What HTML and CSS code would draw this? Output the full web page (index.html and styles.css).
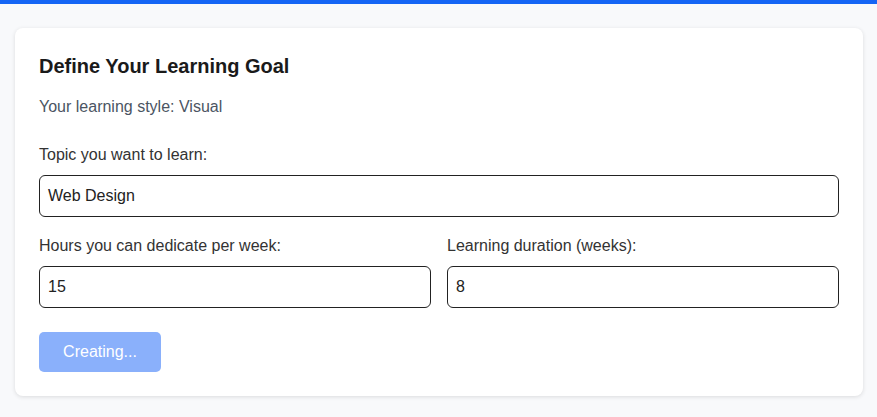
FILE: index.html
```html
<!DOCTYPE html>
<html>
<head>
<meta charset="utf-8">
<link rel="stylesheet" href="styles.css">
</head>
<body>
<div class="topbar"></div>
<main class="page">
  <section class="card">
    <h2 class="title">Define Your Learning Goal</h2>
    <p class="style">Your learning style: Visual</p>
    <div class="field">
      <label class="label">Topic you want to learn:</label>
      <div class="input">Web Design</div>
    </div>
    <div class="row">
      <div class="field">
        <label class="label">Hours you can dedicate per week:</label>
        <div class="input">15</div>
      </div>
      <div class="field">
        <label class="label">Learning duration (weeks):</label>
        <div class="input">8</div>
      </div>
    </div>
    <div class="actions">
      <button class="btn">Creating...</button>
    </div>
  </section>
</main>
</body>
</html>
```
FILE: styles.css
```css
* { box-sizing: border-box; }
html, body { margin: 0; padding: 0; }
body {
  background: #f8f9fb;
  font-family: "Liberation Sans", Arial, sans-serif;
  color: #222;
  height: 417px;
  overflow: hidden;
}
.topbar { height: 4px; background: #1565f5; }
.page { padding: 24px 14px 0 15px; }
.card {
  background: #fff;
  border-radius: 8px;
  box-shadow: 0 1px 4px rgba(0,0,0,0.12);
  padding: 24px 24px 24px 24px;
}
.title {
  margin: 0;
  font-size: 20px;
  line-height: 28px;
  font-weight: 700;
  color: #1a1a1a;
}
.style {
  margin: 15px 0 24px;
  font-size: 16px;
  line-height: 24px;
  color: #4b5563;
}
.field { display: flex; flex-direction: column; }
.label {
  font-size: 16px;
  line-height: 24px;
  margin-bottom: 8px;
  color: #333;
}
.input {
  height: 42px;
  border: 1px solid #222;
  border-radius: 6px;
  padding: 0 8px;
  display: flex;
  align-items: center;
  font-size: 16px;
  color: #222;
}
.row {
  display: grid;
  grid-template-columns: 1fr 1fr;
  gap: 16px;
  margin-top: 17px;
}
.actions { margin-top: 24px; display: flex; }
.btn {
  height: 40px;
  width: 122px;
  border: none;
  border-radius: 5px;
  background: #8ab0fb;
  color: #fff;
  font-family: inherit;
  font-size: 16px;
}
```
